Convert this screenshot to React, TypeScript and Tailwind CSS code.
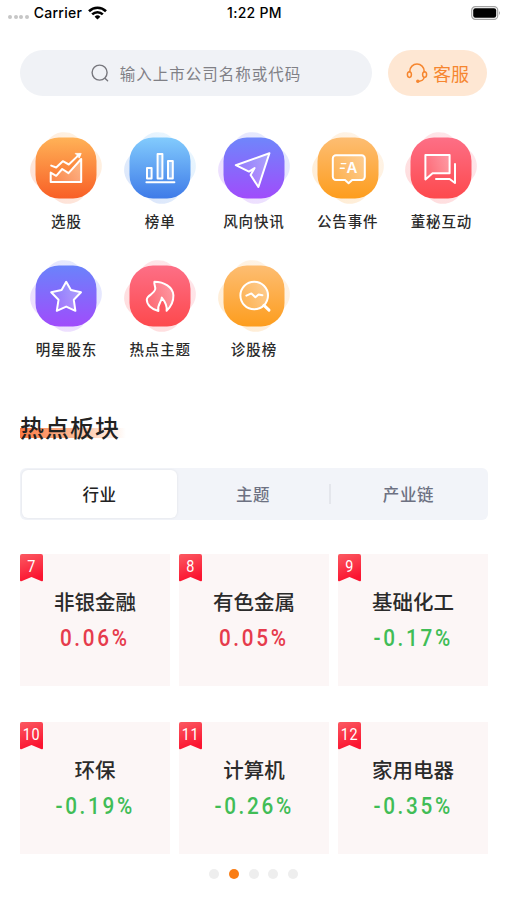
import React from 'react';

interface MenuItem {
  label: string;
  from: string;
  to: string;
  icon: React.ReactNode;
}

interface Sector {
  rank: number;
  name: string;
  change: string;
}

const menu: MenuItem[] = [
  {
    label: '选股',
    from: '#ffb257',
    to: '#f85f26',
    icon: (
      <>
        <path d="M24.7 44.6 30.2 47.8 36.2 41 42.5 45.2 55.2 31V54H24.7Z" fill="url(#shine)" />
        <path d="M25.2 37.6 30.2 39.5 36.8 33.2 42.8 36.5 53.4 26.4" />
        <path d="M49.6 25.4h5.6l-1.8 4.4Z" fill="#fff" strokeWidth="0.8" />
      </>
    ),
  },
  {
    label: '榜单',
    from: '#82cbfd',
    to: '#3f7be8',
    icon: (
      <>
        <path d="M27 40h4.6v10.4H27ZM37.6 26h4.8v24.4h-4.8ZM48 33h4.8v17.4H48Z" fill="url(#shine)" />
        <path d="M26.4 54.3h28" />
      </>
    ),
  },
  {
    label: '风向快讯',
    from: '#6f86fb',
    to: '#a04cfb',
    icon: <path d="M55.4 25.3 21.8 37.2 35 43.6 40.6 40 36.6 47 44.4 59Z" fill="url(#shine)" />,
  },
  {
    label: '公告事件',
    from: '#fdbd72',
    to: '#fd9d1e',
    icon: (
      <>
        <path
          d="M28 27.2H53.6a3.2 3.2 0 0 1 3.2 3.2V48.8a3.2 3.2 0 0 1-3.2 3.2H44.2L40.6 55.2 37 52H28a3.2 3.2 0 0 1-3.2-3.2V30.4a3.2 3.2 0 0 1 3.2-3.2Z"
          fill="url(#shine)"
        />
        <path d="M33.2 35.6h4.6M32.2 40.2h4" strokeWidth="1.4" />
        <text x="38.4" y="44.6" fontSize="15" fontWeight="600" fontFamily="Inter, sans-serif" fill="#fff" stroke="none">
          A
        </text>
      </>
    ),
  },
  {
    label: '董秘互动',
    from: '#fd6f86',
    to: '#fd494d',
    icon: (
      <>
        <path d="M24.4 27H48.6V45.2H31.6L24.4 51.4Z" fill="url(#shine)" />
        <path d="M54 36V55L48.6 51H35" />
      </>
    ),
  },
  {
    label: '明星股东',
    from: '#6a83fb',
    to: '#a04cfb',
    icon: (
      <path
        d="M40.2 25.8 44.9 34.1 55 36.2 47.8 43.8 49.4 54.8 40.2 50.6 30.8 54.8 32.5 43.8 25.2 36.2 35.6 34.1Z"
        fill="url(#shine)"
      />
    ),
  },
  {
    label: '热点主题',
    from: '#fd6f86',
    to: '#fd494d',
    icon: (
      <path
        d="M34.4 25.8C44 25.8 53 31 53.4 39.4 53.6 46 50.6 51 46.6 54.8 47.4 49.6 45 45.6 41.8 41.6 41.8 46 37 48 38.4 55 31.4 53.4 26.6 48.6 26.8 43.4 27.4 38.6 34 38.6 35.2 33.4 35.8 30.6 33.8 28.6 34.4 25.8Z"
        fill="url(#shine)"
      />
    ),
  },
  {
    label: '诊股榜',
    from: '#fdbd72',
    to: '#fd9d1e',
    icon: (
      <>
        <circle cx="40.2" cy="39.5" r="13.8" fill="url(#shine)" />
        <path d="M50 49.4 55 54.2" strokeWidth="3" />
        <path d="M32.4 39.6 37.4 37.4 41.4 41.2 44.6 38.4 48.4 39.2" />
      </>
    ),
  },
];

const sectors: Sector[] = [
  { rank: 7, name: '非银金融', change: '0.06%' },
  { rank: 8, name: '有色金属', change: '0.05%' },
  { rank: 9, name: '基础化工', change: '-0.17%' },
  { rank: 10, name: '环保', change: '-0.19%' },
  { rank: 11, name: '计算机', change: '-0.26%' },
  { rank: 12, name: '家用电器', change: '-0.35%' },
];

const StatusBar: React.FC = () => (
  <div className="grid h-[25px] grid-cols-3 items-center pr-[6px] pl-2 font-['Inter',sans-serif] text-[14px] font-medium text-black">
    <div className="flex items-center">
      <div className="mt-2 flex gap-[1.6px]">
        {[0, 1, 2, 3].map((i) => (
          <span key={i} className="size-[4px] rounded-full bg-[#c6c6c6]" />
        ))}
      </div>
      <span className="ml-[5px] tracking-[0.25px]">Carrier</span>
      <svg className="ml-[6px]" width="19" height="14" viewBox="0 0 19 14" fill="none" stroke="#000" strokeWidth="2.6">
        <path d="M1 5.2a12.2 12.2 0 0 1 17 0" />
        <path d="M4.2 8.4a7.6 7.6 0 0 1 10.6 0" />
        <path d="M9.5 13.6 6.6 10.7a4.1 4.1 0 0 1 5.8 0Z" fill="#000" stroke="none" />
      </svg>
    </div>
    <span className="text-center tracking-[0.3px]">1:22 PM</span>
    <svg className="justify-self-end" width="30" height="14" viewBox="0 0 30 14">
      <rect x="0.7" y="0.7" width="26" height="12.6" rx="3.6" fill="none" stroke="#a3a3a3" strokeWidth="1.2" />
      <rect x="2.2" y="2.2" width="23" height="9.6" rx="2.2" fill="#000" />
      <path d="M28 4.8q1.6 2.2 0 4.4Z" fill="#888" />
    </svg>
  </div>
);

const MenuButton: React.FC<{ item: MenuItem; id: string }> = ({ item, id }) => (
  <div className="flex h-32 flex-col items-center">
    <svg width="80" height="80" viewBox="0 0 80 80" fill="none">
      <defs>
        <linearGradient id={id} x1="0" y1="0" x2="0" y2="1">
          <stop stopColor={item.from} />
          <stop offset="1" stopColor={item.to} />
        </linearGradient>
      </defs>
      <rect x="8.7" y="8.7" width="62.6" height="62.6" rx="20" fill={`url(#${id})`} opacity="0.18" transform="rotate(38 40 40)" />
      <rect x="9.5" y="9.5" width="61" height="61" rx="23.5" fill={`url(#${id})`} />
      <g stroke="#fff" strokeWidth="2" strokeLinejoin="round" strokeLinecap="round">
        {item.icon}
      </g>
    </svg>
    <span className="mt-[3px] whitespace-nowrap text-[14.5px] leading-5 font-medium tracking-[0.9px] text-[#2b2b2b]">
      {item.label}
    </span>
  </div>
);

const SectorCard: React.FC<{ sector: Sector }> = ({ sector }) => {
  const isDown = sector.change.startsWith('-');
  return (
    <div className="relative flex h-[132px] flex-col items-center bg-[#fcf6f6] pt-8">
      <div className="absolute top-0 left-0 h-7 w-[23px]">
        <svg className="absolute inset-0" width="23" height="28" viewBox="0 0 23 28">
          <path d="M2 0H21a2 2 0 0 1 2 2V26.2Q23 28 21 27L11.5 23 2 27Q0 28 0 26.2V2a2 2 0 0 1 2-2Z" fill="url(#ribbon)" />
        </svg>
        <span className="relative block scale-x-90 text-center font-['Roboto',sans-serif] text-[16px] leading-[26px] tracking-[0.6px] text-white">
          {sector.rank}
        </span>
      </div>
      <h3 className="text-[20.5px] leading-[30px] font-medium text-[#2b2b2b]">{sector.name}</h3>
      <p
        className={`mt-[9px] scale-x-90 font-['Roboto',sans-serif] text-[23px] leading-7 font-medium tracking-[3px] ${
          isDown ? 'text-[#41bd56]' : 'text-[#e63b4c]'
        }`}
      >
        {sector.change}
      </p>
    </div>
  );
};

const App: React.FC = () => {
  return (
    <div className="h-[900px] w-[507px] overflow-hidden bg-white font-['Noto_Sans_CJK_SC',sans-serif]">
      <svg width="0" height="0" className="absolute">
        <defs>
          <linearGradient id="shine" x1="0" y1="0" x2="1" y2="0">
            <stop stopColor="#fff" stopOpacity="0.1" />
            <stop offset="1" stopColor="#fff" stopOpacity="0.35" />
          </linearGradient>
          <linearGradient id="ribbon" x1="0" y1="0" x2="0.3" y2="1">
            <stop stopColor="#fb5a62" />
            <stop offset="1" stopColor="#fb1430" />
          </linearGradient>
        </defs>
      </svg>
      <StatusBar />

      <div className="mt-[25.3px] flex gap-4 px-5">
        <div className="flex h-[46px] w-[353px] items-center justify-center rounded-full bg-[#f0f2f6] text-[#808086]">
          <svg width="18" height="18" viewBox="0 0 18 18" fill="none" stroke="#77777d" strokeWidth="1.4" strokeLinecap="round">
            <circle cx="8.6" cy="8.6" r="7.5" />
            <path d="m14.2 14.4 2.4 2.3" />
          </svg>
          <span className="ml-[11px] text-[15.5px] tracking-[1px]">输入上市公司名称或代码</span>
        </div>
        <div className="flex h-[46px] w-[99px] items-center justify-center rounded-full bg-[#fee7d3] text-[#f6862f]">
          <svg width="22" height="20" viewBox="0 0 22 20" fill="none" stroke="currentColor" strokeWidth="1.5" strokeLinecap="round">
            <path d="M3.8 9V8.2a7.2 7.2 0 0 1 14.4 0V9" />
            <ellipse cx="3.4" cy="11.6" rx="2" ry="2.8" />
            <ellipse cx="18.6" cy="11.6" rx="2" ry="2.8" />
            <path d="M18.2 14.4q-1 3.6-5.6 4" />
            <circle cx="11.8" cy="18.2" r="1" fill="currentColor" />
          </svg>
          <span className="ml-[5px] text-[18px]">客服</span>
        </div>
      </div>

      <div className="mt-[31.2px] ml-[19.6px] grid w-[468.75px] grid-cols-5 pt-[0.2px]">
        {menu.map((item, i) => (
          <MenuButton key={item.label} item={item} id={`menu-${i}`} />
        ))}
      </div>

      <div className="mt-[25.3px] px-5">
        <h2 className="inline-block bg-[linear-gradient(90deg,#fb7a45,#fcbf9c_55%,#ffffff)] bg-[length:106px_10px] bg-[position:0_19px] bg-no-repeat pr-2 text-[24px] leading-9 font-medium tracking-[1px] text-[#222]">
          热点板块
        </h2>
      </div>

      <div className="mx-5 mt-[23px] flex h-[52px] w-[468px] items-center rounded-md bg-[#f2f4f9] p-[2px] text-[16.5px] font-medium tracking-[0.6px] text-[#6d7182]">
        <div className="flex h-12 w-[155px] items-center justify-center rounded-md bg-white text-[#222] shadow-[0_0_3px_rgba(0,0,0,0.08)]">
          行业
        </div>
        <div className="flex h-5 w-[154px] items-center justify-center border-r-2 border-[#e4e6ec]">主题</div>
        <div className="flex flex-1 items-center justify-center">产业链</div>
      </div>

      <div className="mx-5 mt-[34px] grid w-[468px] grid-cols-3 gap-x-[9px] gap-y-9">
        {sectors.map((sector) => (
          <SectorCard key={sector.rank} sector={sector} />
        ))}
      </div>

      <div className="mt-[15px] flex justify-center gap-[9.6px]">
        {[0, 1, 2, 3, 4].map((i) => (
          <span key={i} className={`size-[10px] rounded-full ${i === 1 ? 'bg-[#fa7d14]' : 'bg-[#eeeeee]'}`} />
        ))}
      </div>
    </div>
  );
};

export default App;
